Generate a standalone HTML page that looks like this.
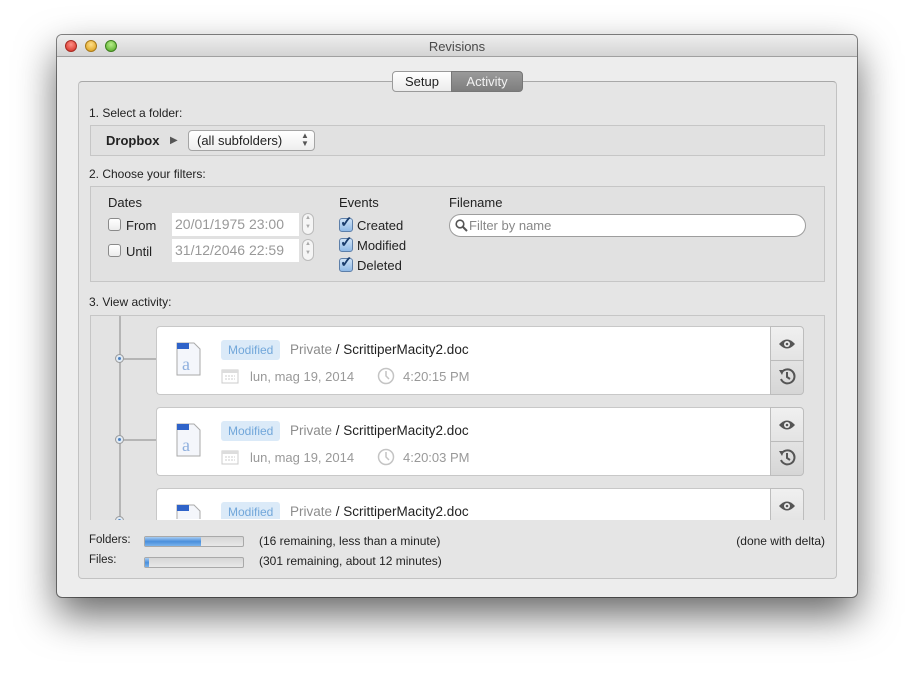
<!DOCTYPE html>
<html><head><meta charset="utf-8"><style>
*{margin:0;padding:0;box-sizing:border-box}
body{width:914px;height:676px;background:#fff;font-family:"Liberation Sans",sans-serif;font-size:12px;color:#222;position:relative;overflow:hidden}
.a{position:absolute}
.win{left:57px;top:35px;width:800px;height:562px;background:#ededed;border-radius:5px;box-shadow:0 18px 40px rgba(0,0,0,.6),0 0 0 1px #888}
.tb{left:57px;top:35px;width:800px;height:22px;border-radius:5px 5px 0 0;background:linear-gradient(#eeeeee,#d4d4d4);border-bottom:1px solid #a0a0a0}
.tl{width:12px;height:12px;border-radius:50%;top:40px}
.t{white-space:nowrap}
.box{background:#e1e1e1;border:1px solid #c6c6c6}
.cb{width:13px;height:13px;border:1px solid #8a8a8a;border-radius:3px;background:linear-gradient(#fff,#ececec)}
.cbc{width:14px;height:14px;border:1px solid #5d7fa9;border-radius:3px;background:linear-gradient(#cfe3f7,#8fb9e6)}
.card{background:#fff;border:1px solid #c8c8c8;border-right:none;border-radius:4px 0 0 4px}
.btn{background:linear-gradient(#f0f0f0,#d6d6d6);border:1px solid #bdbdbd;border-radius:0 4px 4px 0}
.badge{background:#dbeaf8;color:#72a7da;font-size:12px;padding:3px 7px;border-radius:3px}
.gray{color:#8c8c8c}
.dot{width:9px;height:9px;border-radius:50%;background:#dfe9f3;border:1.5px solid #9a9a9a}
.dot::after{content:"";position:absolute;left:1.5px;top:1.5px;width:3px;height:3px;border-radius:50%;background:#4a7fc0}
</style></head><body>
<div class="a win"></div>
<div class="a tb"></div>
<div class="a tl" style="left:65px;background:radial-gradient(circle at 50% 35%,#ff8f86,#d1291e);border:1px solid #a52a22"></div>
<div class="a tl" style="left:85px;background:radial-gradient(circle at 50% 35%,#ffe08a,#d99a12);border:1px solid #a87a1a"></div>
<div class="a tl" style="left:105px;background:radial-gradient(circle at 50% 35%,#b8ee8a,#4ea621);border:1px solid #3d7f1e"></div>
<div class="a t" style="left:0;width:914px;text-align:center;top:39px;font-size:13px;color:#4a4a4a">Revisions</div>

<div class="a" style="left:78px;top:81px;width:759px;height:498px;background:#e5e5e5;border:1px solid #c2c2c2;border-top-color:#a8a8a8;border-radius:4px"></div>
<div class="a" style="left:392px;top:71px;width:60px;height:21px;background:linear-gradient(#fff,#ececec);border:1px solid #9a9a9a;border-radius:4px 0 0 4px;text-align:center;line-height:19px;font-size:13px">Setup</div>
<div class="a" style="left:451px;top:71px;width:72px;height:21px;background:linear-gradient(#9a9a9a,#7e7e7e);border:1px solid #777;border-radius:0 4px 4px 0;text-align:center;line-height:19px;font-size:13px;color:#f2f2f2">Activity</div>

<div class="a t" style="left:89px;top:106px">1. Select a folder:</div>
<div class="a box" style="left:90px;top:125px;width:735px;height:31px"></div>
<div class="a t" style="left:106px;top:133px;font-size:13px;font-weight:bold">Dropbox</div>
<div class="a t" style="left:170px;top:135px;font-size:10px;color:#555">▶</div>
<div class="a" style="left:188px;top:130px;width:127px;height:21px;background:linear-gradient(#fff,#eee);border:1px solid #a5a5a5;border-radius:4px"></div>
<div class="a t" style="left:197px;top:133px;font-size:13px">(all subfolders)</div>
<div class="a t" style="left:301px;top:132px;font-size:8px;line-height:8px;color:#555">▲<br>▼</div>

<div class="a t" style="left:89px;top:167px">2. Choose your filters:</div>
<div class="a box" style="left:90px;top:186px;width:735px;height:96px"></div>
<div class="a t" style="left:108px;top:195px;font-size:13px">Dates</div>
<div class="a cb" style="left:108px;top:218px"></div>
<div class="a t" style="left:126px;top:218px;font-size:13px">From</div>
<div class="a cb" style="left:108px;top:244px"></div>
<div class="a t" style="left:126px;top:244px;font-size:13px">Until</div>
<div class="a" style="left:172px;top:213px;width:127px;height:23px;background:#fff"></div>
<div class="a t" style="left:175px;top:216px;font-size:14px;color:#999">20/01/1975 23:00</div>
<div class="a" style="left:172px;top:239px;width:127px;height:23px;background:#fff"></div>
<div class="a t" style="left:175px;top:242px;font-size:14px;color:#999">31/12/2046 22:59</div>
<div class="a" style="left:302px;top:213px;width:12px;height:22px;border:1px solid #bbb;border-radius:6px;background:#f5f5f5;font-size:6px;color:#aaa;text-align:center;line-height:9px">▲<br>▼</div>
<div class="a" style="left:302px;top:239px;width:12px;height:22px;border:1px solid #bbb;border-radius:6px;background:#f5f5f5;font-size:6px;color:#aaa;text-align:center;line-height:9px">▲<br>▼</div>

<div class="a t" style="left:339px;top:195px;font-size:13px">Events</div>
<div class="a cbc" style="left:339px;top:218px"></div><div class="a t" style="left:340px;top:213px;font-size:15px;color:#1b3e6e;font-weight:bold">✓</div>
<div class="a t" style="left:357px;top:218px;font-size:13px">Created</div>
<div class="a cbc" style="left:339px;top:238px"></div><div class="a t" style="left:340px;top:233px;font-size:15px;color:#1b3e6e;font-weight:bold">✓</div>
<div class="a t" style="left:357px;top:238px;font-size:13px">Modified</div>
<div class="a cbc" style="left:339px;top:258px"></div><div class="a t" style="left:340px;top:253px;font-size:15px;color:#1b3e6e;font-weight:bold">✓</div>
<div class="a t" style="left:357px;top:258px;font-size:13px">Deleted</div>

<div class="a t" style="left:449px;top:195px;font-size:13px">Filename</div>
<div class="a" style="left:449px;top:214px;width:357px;height:23px;background:#fff;border:1px solid #9d9d9d;border-radius:12px"></div>
<svg class="a" style="left:455px;top:219px" width="13" height="13"><circle cx="5" cy="5" r="3.8" fill="none" stroke="#555" stroke-width="1.6"/><path d="M8 8l4 4" stroke="#555" stroke-width="2"/></svg>
<div class="a t" style="left:469px;top:218px;font-size:13px;color:#888">Filter by name</div>

<div class="a t" style="left:89px;top:295px">3. View activity:</div>
<div class="a" style="left:90px;top:315px;width:735px;height:205px;background:#e3e3e3;border:1px solid #c6c6c6;border-bottom:none;overflow:hidden">
 <div class="a" style="left:28px;top:0;width:2px;height:205px;background:#b5b5b5"></div>
 <div class="a" style="left:30px;top:42px;width:36px;height:2px;background:#b5b5b5"></div>
 <div class="a" style="left:30px;top:123px;width:36px;height:2px;background:#b5b5b5"></div>
 <div class="a dot" style="left:24px;top:38px"></div>
 <div class="a dot" style="left:24px;top:119px"></div>
 <div class="a dot" style="left:24px;top:200px"></div>
 <div class="a card" style="left:65px;top:10px;width:615px;height:69px"></div>
 <div class="a card" style="left:65px;top:91px;width:615px;height:69px"></div>
 <div class="a card" style="left:65px;top:172px;width:615px;height:69px"></div>
 <div class="a btn" style="left:679px;top:10px;width:34px;height:69px"></div>
 <div class="a btn" style="left:679px;top:91px;width:34px;height:69px"></div>
 <div class="a btn" style="left:679px;top:172px;width:34px;height:69px"></div>
 <div class="a" style="left:680px;top:44px;width:32px;height:1px;background:#bbb"></div>
 <div class="a" style="left:680px;top:125px;width:32px;height:1px;background:#bbb"></div>
</div>

<svg class="a" style="left:176px;top:342px" width="25" height="34"><path d="M1 1h17l6 6v26H1z" fill="#f4f6fb" stroke="#aaa"/><rect x="1" y="1" width="12" height="6" fill="#2f63c9"/><text x="6" y="28" font-family="Liberation Serif" font-size="18" fill="#8fb0de">a</text></svg>
<div class="a badge t" style="left:221px;top:340px">Modified</div>
<div class="a t" style="left:290px;top:342px;font-size:13.5px"><span class="gray">Private</span> / ScrittiperMacity2.doc</div>
<svg class="a" style="left:221px;top:368px" width="18" height="16"><rect x="1" y="2" width="16" height="13" fill="none" stroke="#ccc"/><rect x="1" y="2" width="16" height="3" fill="#ddd"/><path d="M4 8h10M4 11h10" stroke="#ccc" stroke-dasharray="2 1"/></svg>
<div class="a t" style="left:250px;top:369px;font-size:13px;color:#999">lun, mag 19, 2014</div>
<svg class="a" style="left:377px;top:367px" width="18" height="18"><circle cx="9" cy="9" r="7.5" fill="none" stroke="#c4c4c4" stroke-width="1.5"/><path d="M9 4v5l3 3" fill="none" stroke="#c4c4c4" stroke-width="1.5"/></svg>
<div class="a t" style="left:403px;top:369px;font-size:13px;color:#999">4:20:15 PM</div>

<svg class="a" style="left:176px;top:423px" width="25" height="34"><path d="M1 1h17l6 6v26H1z" fill="#f4f6fb" stroke="#aaa"/><rect x="1" y="1" width="12" height="6" fill="#2f63c9"/><text x="6" y="28" font-family="Liberation Serif" font-size="18" fill="#8fb0de">a</text></svg>
<div class="a badge t" style="left:221px;top:421px">Modified</div>
<div class="a t" style="left:290px;top:423px;font-size:13.5px"><span class="gray">Private</span> / ScrittiperMacity2.doc</div>
<svg class="a" style="left:221px;top:449px" width="18" height="16"><rect x="1" y="2" width="16" height="13" fill="none" stroke="#ccc"/><rect x="1" y="2" width="16" height="3" fill="#ddd"/><path d="M4 8h10M4 11h10" stroke="#ccc" stroke-dasharray="2 1"/></svg>
<div class="a t" style="left:250px;top:450px;font-size:13px;color:#999">lun, mag 19, 2014</div>
<svg class="a" style="left:377px;top:448px" width="18" height="18"><circle cx="9" cy="9" r="7.5" fill="none" stroke="#c4c4c4" stroke-width="1.5"/><path d="M9 4v5l3 3" fill="none" stroke="#c4c4c4" stroke-width="1.5"/></svg>
<div class="a t" style="left:403px;top:450px;font-size:13px;color:#999">4:20:03 PM</div>

<div class="a" style="left:156px;top:500px;width:500px;height:19px;overflow:hidden">
<svg class="a" style="left:20px;top:4px" width="25" height="34"><path d="M1 1h17l6 6v26H1z" fill="#f4f6fb" stroke="#aaa"/><rect x="1" y="1" width="12" height="6" fill="#2f63c9"/></svg>
<div class="a badge t" style="left:65px;top:2px">Modified</div>
<div class="a t" style="left:134px;top:4px;font-size:13.5px"><span class="gray">Private</span> / ScrittiperMacity2.doc</div>
</div>

<svg class="a" style="left:778px;top:337px" width="18" height="14"><path d="M1 7Q9-2 17 7Q9 16 1 7z" fill="#555"/><circle cx="9" cy="7" r="3" fill="#eee"/><circle cx="9" cy="7" r="1.3" fill="#555"/></svg>
<svg class="a" style="left:778px;top:367px" width="18" height="18"><path d="M4 5A7 7 0 1 1 3 12" fill="none" stroke="#555" stroke-width="2"/><path d="M1 3l5 0-2 5z" fill="#555"/><path d="M9 5v5l3 2" fill="none" stroke="#555" stroke-width="2"/></svg>
<svg class="a" style="left:778px;top:418px" width="18" height="14"><path d="M1 7Q9-2 17 7Q9 16 1 7z" fill="#555"/><circle cx="9" cy="7" r="3" fill="#eee"/><circle cx="9" cy="7" r="1.3" fill="#555"/></svg>
<svg class="a" style="left:778px;top:448px" width="18" height="18"><path d="M4 5A7 7 0 1 1 3 12" fill="none" stroke="#555" stroke-width="2"/><path d="M1 3l5 0-2 5z" fill="#555"/><path d="M9 5v5l3 2" fill="none" stroke="#555" stroke-width="2"/></svg>
<svg class="a" style="left:778px;top:499px" width="18" height="14"><path d="M1 7Q9-2 17 7Q9 16 1 7z" fill="#555"/><circle cx="9" cy="7" r="3" fill="#eee"/><circle cx="9" cy="7" r="1.3" fill="#555"/></svg>

<div class="a t" style="left:89px;top:534px;font-size:11.5px">Folders:</div>
<div class="a" style="left:144px;top:536px;width:100px;height:11px;background:linear-gradient(#d6d6d6,#e8e8e8);border:1px solid #a9a9a9;border-radius:2px"></div>
<div class="a" style="left:145px;top:537px;width:56px;height:9px;background:linear-gradient(#a9cdf2,#4a8fdc,#7ab3ec)"></div>
<div class="a t" style="left:259px;top:534px;font-size:12px">(16 remaining, less than a minute)</div>
<div class="a t" style="right:89px;top:534px;font-size:12px">(done with delta)</div>
<div class="a t" style="left:89px;top:554px;font-size:11.5px">Files:</div>
<div class="a" style="left:144px;top:557px;width:100px;height:11px;background:linear-gradient(#d6d6d6,#e8e8e8);border:1px solid #a9a9a9;border-radius:2px"></div>
<div class="a" style="left:145px;top:558px;width:4px;height:9px;background:linear-gradient(#a9cdf2,#4a8fdc,#7ab3ec)"></div>
<div class="a t" style="left:259px;top:554px;font-size:12px">(301 remaining, about 12 minutes)</div>
</body></html>
